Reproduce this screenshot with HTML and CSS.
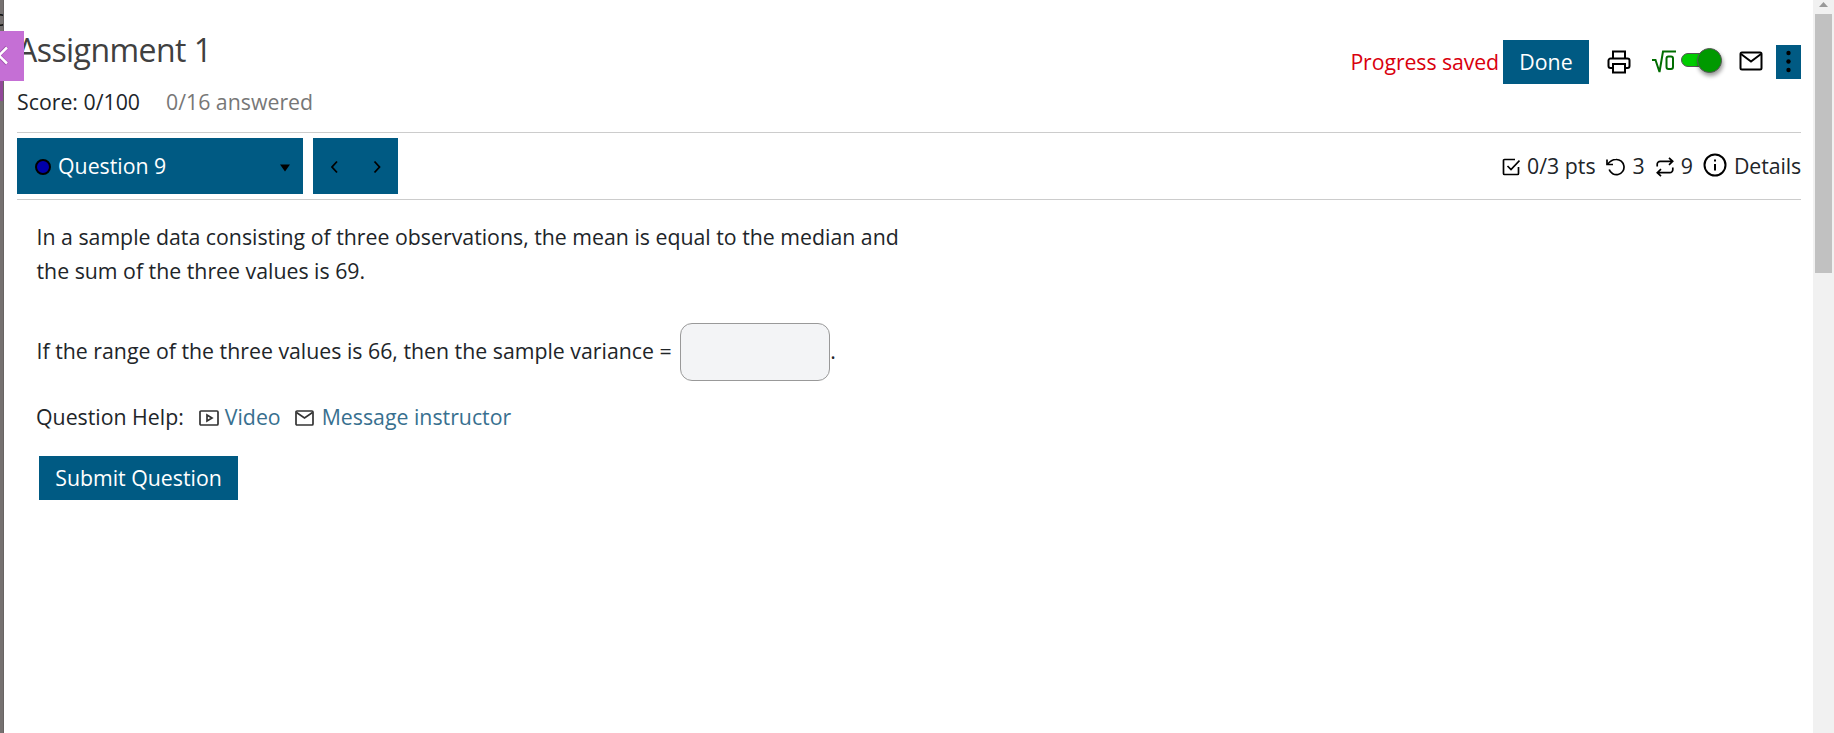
FILE: index.html
```
<!DOCTYPE html>
<html lang="en">
<head>
<meta charset="utf-8">
<title>Assignment 1</title>
<link rel="stylesheet" href="styles.css">
</head>
<body>
<div class="app">
  <aside class="strip"><span class="strip-letter">c</span><span class="strip-accent"></span></aside>
  <button class="collapse" aria-label="Collapse"><svg width="24" height="50" viewBox="0 0 24 50"><path d="M7 16 L-1 24.500 L7 33" fill="none" stroke="#a04fae" stroke-width="4"/><path d="M7 16.500 L-1 24.500 L7 32.500" fill="none" stroke="#fff" stroke-width="2.500"/></svg></button>
  <main class="page">
    <header class="header">
      <div class="titles">
        <h1 class="title">Assignment 1</h1>
        <p class="score"><span>Score: 0/100</span><span class="answered">0/16 answered</span></p>
      </div>
      <div class="tools">
        <span class="saved">Progress saved</span>
        <button class="btn done">Done</button>
        <svg class="print" width="24" height="24" viewBox="0 0 24 24" fill="none" stroke="#000" stroke-width="2"><path d="M6 8V1.500h12V8M6 18H3.500a2 2 0 0 1-2-2v-5.500a2 2 0 0 1 2-2h17a2 2 0 0 1 2 2V16a2 2 0 0 1-2 2H18"/><path d="M6 14h12v8.500H6z"/></svg>
        <svg class="root" width="24" height="24" viewBox="0 0 24 24" fill="none" stroke="#006c00" stroke-width="2"><path d="M0 10h3.500l4 12L11 1.500h13"/><rect x="14.500" y="6.500" width="6.500" height="12.500" rx="2"/></svg>
        <span class="toggle"><span class="knob"></span></span>
        <svg class="mail" width="24" height="20" viewBox="0 0 24 20" fill="none" stroke="#000" stroke-width="2"><rect x="1.500" y="1.500" width="21" height="17" rx="1.500"/><path d="M2 3l10 7.500L22 3"/></svg>
        <button class="kebab" aria-label="More"><svg width="25" height="34"><circle cx="12.500" cy="8" r="2.200"/><circle cx="12.500" cy="16.500" r="2.200"/><circle cx="12.500" cy="25" r="2.200"/></svg></button>
      </div>
    </header>
    <nav class="bar">
      <button class="select"><span class="dot"></span><span>Question 9</span><svg class="caret" width="10" height="8"><path d="M0 .5h10L5 7.500z"/></svg></button>
      <div class="pager"><svg width="85" height="56" fill="none" stroke="#000" stroke-width="1.800"><path d="M24 23.500l-5 5.500 5 5.500M61.500 23.500l5 5.500-5 5.500"/></svg></div>
      <div class="info">
        <svg class="check" width="18" height="18" viewBox="0 0 18 18" fill="none" stroke="#000" stroke-width="1.700"><path d="M13 1.500H2.500a1 1 0 0 0-1 1v13a1 1 0 0 0 1 1h13a1 1 0 0 0 1-1V9"/><path d="M5.500 8l3.500 3.500 8.500-9"/></svg>
        <span class="pts">0/3 pts</span>
        <svg class="undo" width="19" height="18" viewBox="0 0 19 18" fill="none" stroke="#000" stroke-width="1.700"><path d="M1 1.500V6.500h6"/><path d="M1.500 6.500C4 3 7 1.500 10 1.500A7.600 7.600 0 1 1 3.200 11.500"/></svg>
        <span class="num">3</span>
        <svg class="swap" width="18" height="20" viewBox="0 0 18 20" fill="none" stroke="#000" stroke-width="1.700"><path d="M13 .8L16.700 4.300 13 7.800M1.200 9.500v-2a3 3 0 0 1 3-3.200h12M5 12.200L1.300 15.700 5 19.200M16.800 10.500v2a3 3 0 0 1-3 3.200H1.800"/></svg>
        <span class="num">9</span>
        <svg class="about" width="24" height="24" viewBox="0 0 24 24" fill="none" stroke="#000" stroke-width="2"><circle cx="12" cy="12" r="10.500"/><path d="M12 11v6.500M12 6.500v2"/></svg>
        <span class="details">Details</span>
      </div>
    </nav>
    <section class="question">
      <p>In a sample data consisting of three observations, the mean is equal to the median and<br>the sum of the three values is 69.</p>
      <p class="answer"><span class="prompt">If the range of the three values is 66, then the sample variance =</span><input class="field" aria-label="Sample variance"><span class="prompt">.</span></p>
      <p class="help"><span>Question Help:</span>
        <svg class="video" width="20" height="16" viewBox="0 0 20 16" fill="none" stroke="#333" stroke-width="1.700"><rect x="1" y="1" width="18" height="14" rx="1"/><path d="M8 5l5 3-5 3z"/></svg>
        <a class="link">Video</a>
        <svg class="letter" width="19" height="16" viewBox="0 0 19 16" fill="none" stroke="#333" stroke-width="1.700"><rect x="1" y="1" width="17" height="14" rx="1"/><path d="M1.500 2.500l8 5.500 8-5.500"/></svg>
        <a class="link">Message instructor</a></p>
      <button class="btn submit">Submit Question</button>
    </section>
  </main>
  <div class="scroll"><svg width="21" height="14"><path d="M6 7L10.500 2 15 7z" fill="#999"/></svg><div class="thumb"></div></div>
</div>
</body>
</html>
```
FILE: styles.css
```
* { box-sizing: border-box; }
body { margin: 0; font: 21.300px/34px "Open Sans", "Noto Sans", sans-serif; color: #212529; background: #fff; overflow: hidden; }
p, h1 { margin: 0; font-weight: 400; white-space: nowrap; }
button { font: inherit; border: 0; padding: 0; border-radius: 0; }
svg { display: block; flex: none; }
.app { display: flex; height: 733px; position: relative; }
.strip { width: 4px; background: #757170; position: relative; overflow: hidden; border-right: 1px solid #686463; }
.strip-letter { position: absolute; left: -6px; top: 1px; color: #111; }
.strip-accent { position: absolute; left: 0; top: 81px; width: 4px; height: 20px; background: #914799; }
.collapse { position: absolute; left: 0; top: 31px; width: 24px; height: 50px; background: #c56fd5; z-index: 2; }
.page { flex: 1; padding: 0 12px 0 13px; }
.header { height: 133px; border-bottom: 1px solid #ccc; display: flex; justify-content: space-between; }
.title { font-size: 32px; line-height: 48px; padding-top: 26px; color: #404040; letter-spacing: -.55px; }
.score { display: flex; padding-top: 11px; }
.answered { margin-left: 26px; color: #777; }
.tools { display: flex; align-items: center; height: 44px; margin-top: 40px; }
.saved { color: #d9000d; margin-right: 4px; letter-spacing: -.1px; }
.btn { background: #005a83; color: #fff; height: 44px; }
.done { width: 86px; }
.print { margin-left: 18px; margin-top: -1px; }
.root { margin-left: 21px; margin-top: -1px; }
.toggle { position: relative; width: 36px; height: 14px; border-radius: 7px; background: #0c0; border: 1px solid #555; margin: -4px 0 0 5px; }
.knob { position: absolute; right: -6px; top: -6px; width: 25px; height: 25px; border-radius: 50%; background: #090; border: 1px solid #555; box-shadow: 1px 3px 4px #0006; }
.mail { margin-left: 22px; margin-top: -2px; }
.kebab { background: #005a83; width: 25px; height: 34px; margin-left: 13px; }
.bar { height: 67px; border-bottom: 1px solid #ccc; display: flex; align-items: center; }
.select { width: 286px; height: 56px; background: #005a83; color: #fff; display: flex; align-items: center; padding: 0 13px 0 18px; }
.dot { width: 16px; height: 16px; border-radius: 50%; background: #00a; border: 2px solid #000; margin: 2px 7px 0 0; }
.caret { margin-left: auto; margin-top: 3px; }
.pager { width: 85px; height: 56px; background: #005a83; margin-left: 10px; }
.info { margin-left: auto; display: flex; align-items: center; }
.check { margin-right: 7px; margin-top: 2px; }
.undo { margin: 2px 8px 0 10px; }
.swap { margin: 2px 7px 0 11px; }
.about { margin: -3px 7px 0 10px; }
.details { letter-spacing: -.1px; }
.question { padding: 20px 0 0 19.500px; }
.answer { display: flex; align-items: center; height: 58px; margin-top: 35px; }
.prompt { padding-bottom: 3px; }
.field { width: 150px; height: 58px; border: 1px solid #999; border-radius: 12px; background: #f3f4f6; margin: 0 0 0 8.500px; }
.help { display: flex; align-items: center; margin: 19px 0 0 -.5px; }
.video { margin: 2px 6px 0 15px; }
.letter { margin: 2px 8px 0 14px; }
.link { color: #38708f; }
.submit { display: block; width: 199px; margin: 22px 0 0 2.500px; }
.scroll { width: 21px; background: #f1f1f1; }
.thumb { width: 17px; height: 259px; margin-left: 2px; background: #c1c1c1; }
```
